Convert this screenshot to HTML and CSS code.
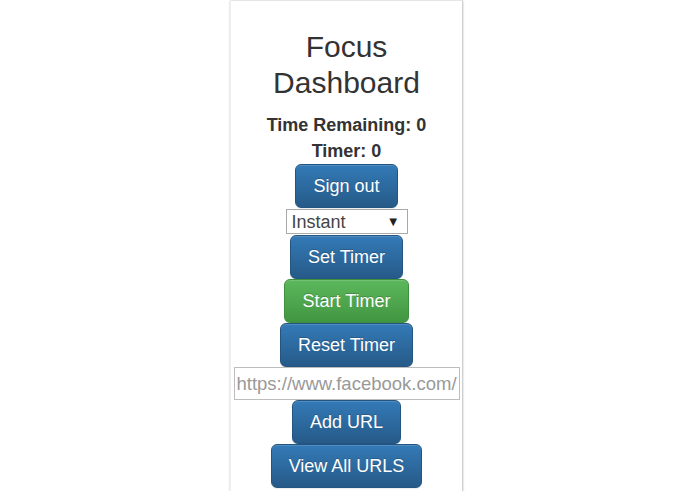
FILE: index.html
```html
<!DOCTYPE html>
<html>
<head>
<meta charset="utf-8">
<title>Focus Dashboard</title>
<link rel="stylesheet" href="styles.css">
</head>
<body>
<div class="popup">
  <h2 class="title">Focus Dashboard</h2>
  <div class="stat">Time Remaining: 0</div>
  <div class="stat">Timer: 0</div>
  <div class="controls">
    <button class="btn btn-primary btn-signout">Sign out</button>
    <div class="select"><span>Instant</span><span class="arrow">▼</span></div>
    <button class="btn btn-primary">Set Timer</button>
    <button class="btn btn-success">Start Timer</button>
    <button class="btn btn-primary">Reset Timer</button>
    <input class="url" type="text" placeholder="https://www.facebook.com/">
    <button class="btn btn-primary">Add URL</button>
    <button class="btn btn-primary">View All URLS</button>
  </div>
</div>
</body>
</html>
```

FILE: styles.css
```css
html, body {
  margin: 0;
  padding: 0;
  background: #fff;
  font-family: "Liberation Sans", Arial, sans-serif;
  color: #333;
}

.popup {
  box-sizing: border-box;
  margin-left: 230px;
  width: 233px;
  height: 491px;
  border-top: 1px solid #e6e6e6;
  border-left: 1px solid #f0f0f0;
  border-right: 1px solid #cfcfcf;
  box-shadow: 0 1px 2px rgba(0, 0, 0, 0.25);
  text-align: center;
  padding-top: 28px;
}

.title {
  margin: 0 0 11px;
  font-size: 30px;
  font-weight: 500;
  line-height: 36px;
  color: #333;
}

.stat {
  font-size: 18px;
  font-weight: bold;
  line-height: 26px;
}

.controls {
  display: flex;
  flex-direction: column;
  align-items: center;
}

.btn {
  box-sizing: border-box;
  height: 44px;
  padding: 10px 17px;
  font-family: "Liberation Sans", Arial, sans-serif;
  font-size: 18px;
  line-height: 22px;
  color: #fff;
  border-radius: 6px;
  border: 1px solid;
  text-shadow: 0 -1px 0 rgba(0, 0, 0, 0.2);
  box-shadow: inset 0 1px 0 rgba(255, 255, 255, 0.15), 0 1px 1px rgba(0, 0, 0, 0.075);
  cursor: pointer;
}

.btn-primary {
  background: linear-gradient(to bottom, #337ab7 0%, #265a88 100%);
  border-color: #245580;
}

.btn-success {
  background: linear-gradient(to bottom, #5cb85c 0%, #419641 100%);
  border-color: #3e8f3e;
}

.select {
  box-sizing: border-box;
  width: 122px;
  height: 25px;
  margin: 1px 0 1px;
  border: 1px solid #a9a9a9;
  background: #fff;
  display: flex;
  align-items: center;
  justify-content: space-between;
  padding: 0 7px 0 5px;
  font-size: 18px;
  line-height: 22px;
  color: #444;
}

.arrow {
  font-size: 13px;
  color: #222;
}

.url {
  box-sizing: border-box;
  width: 226px;
  height: 33px;
  margin: 0;
  padding: 1px 2px;
  border: 1px solid #bdbdbd;
  font-family: "Liberation Sans", Arial, sans-serif;
  font-size: 18.5px;
  color: #333;
  outline: none;
}

.url::placeholder {
  color: #999;
}
```
